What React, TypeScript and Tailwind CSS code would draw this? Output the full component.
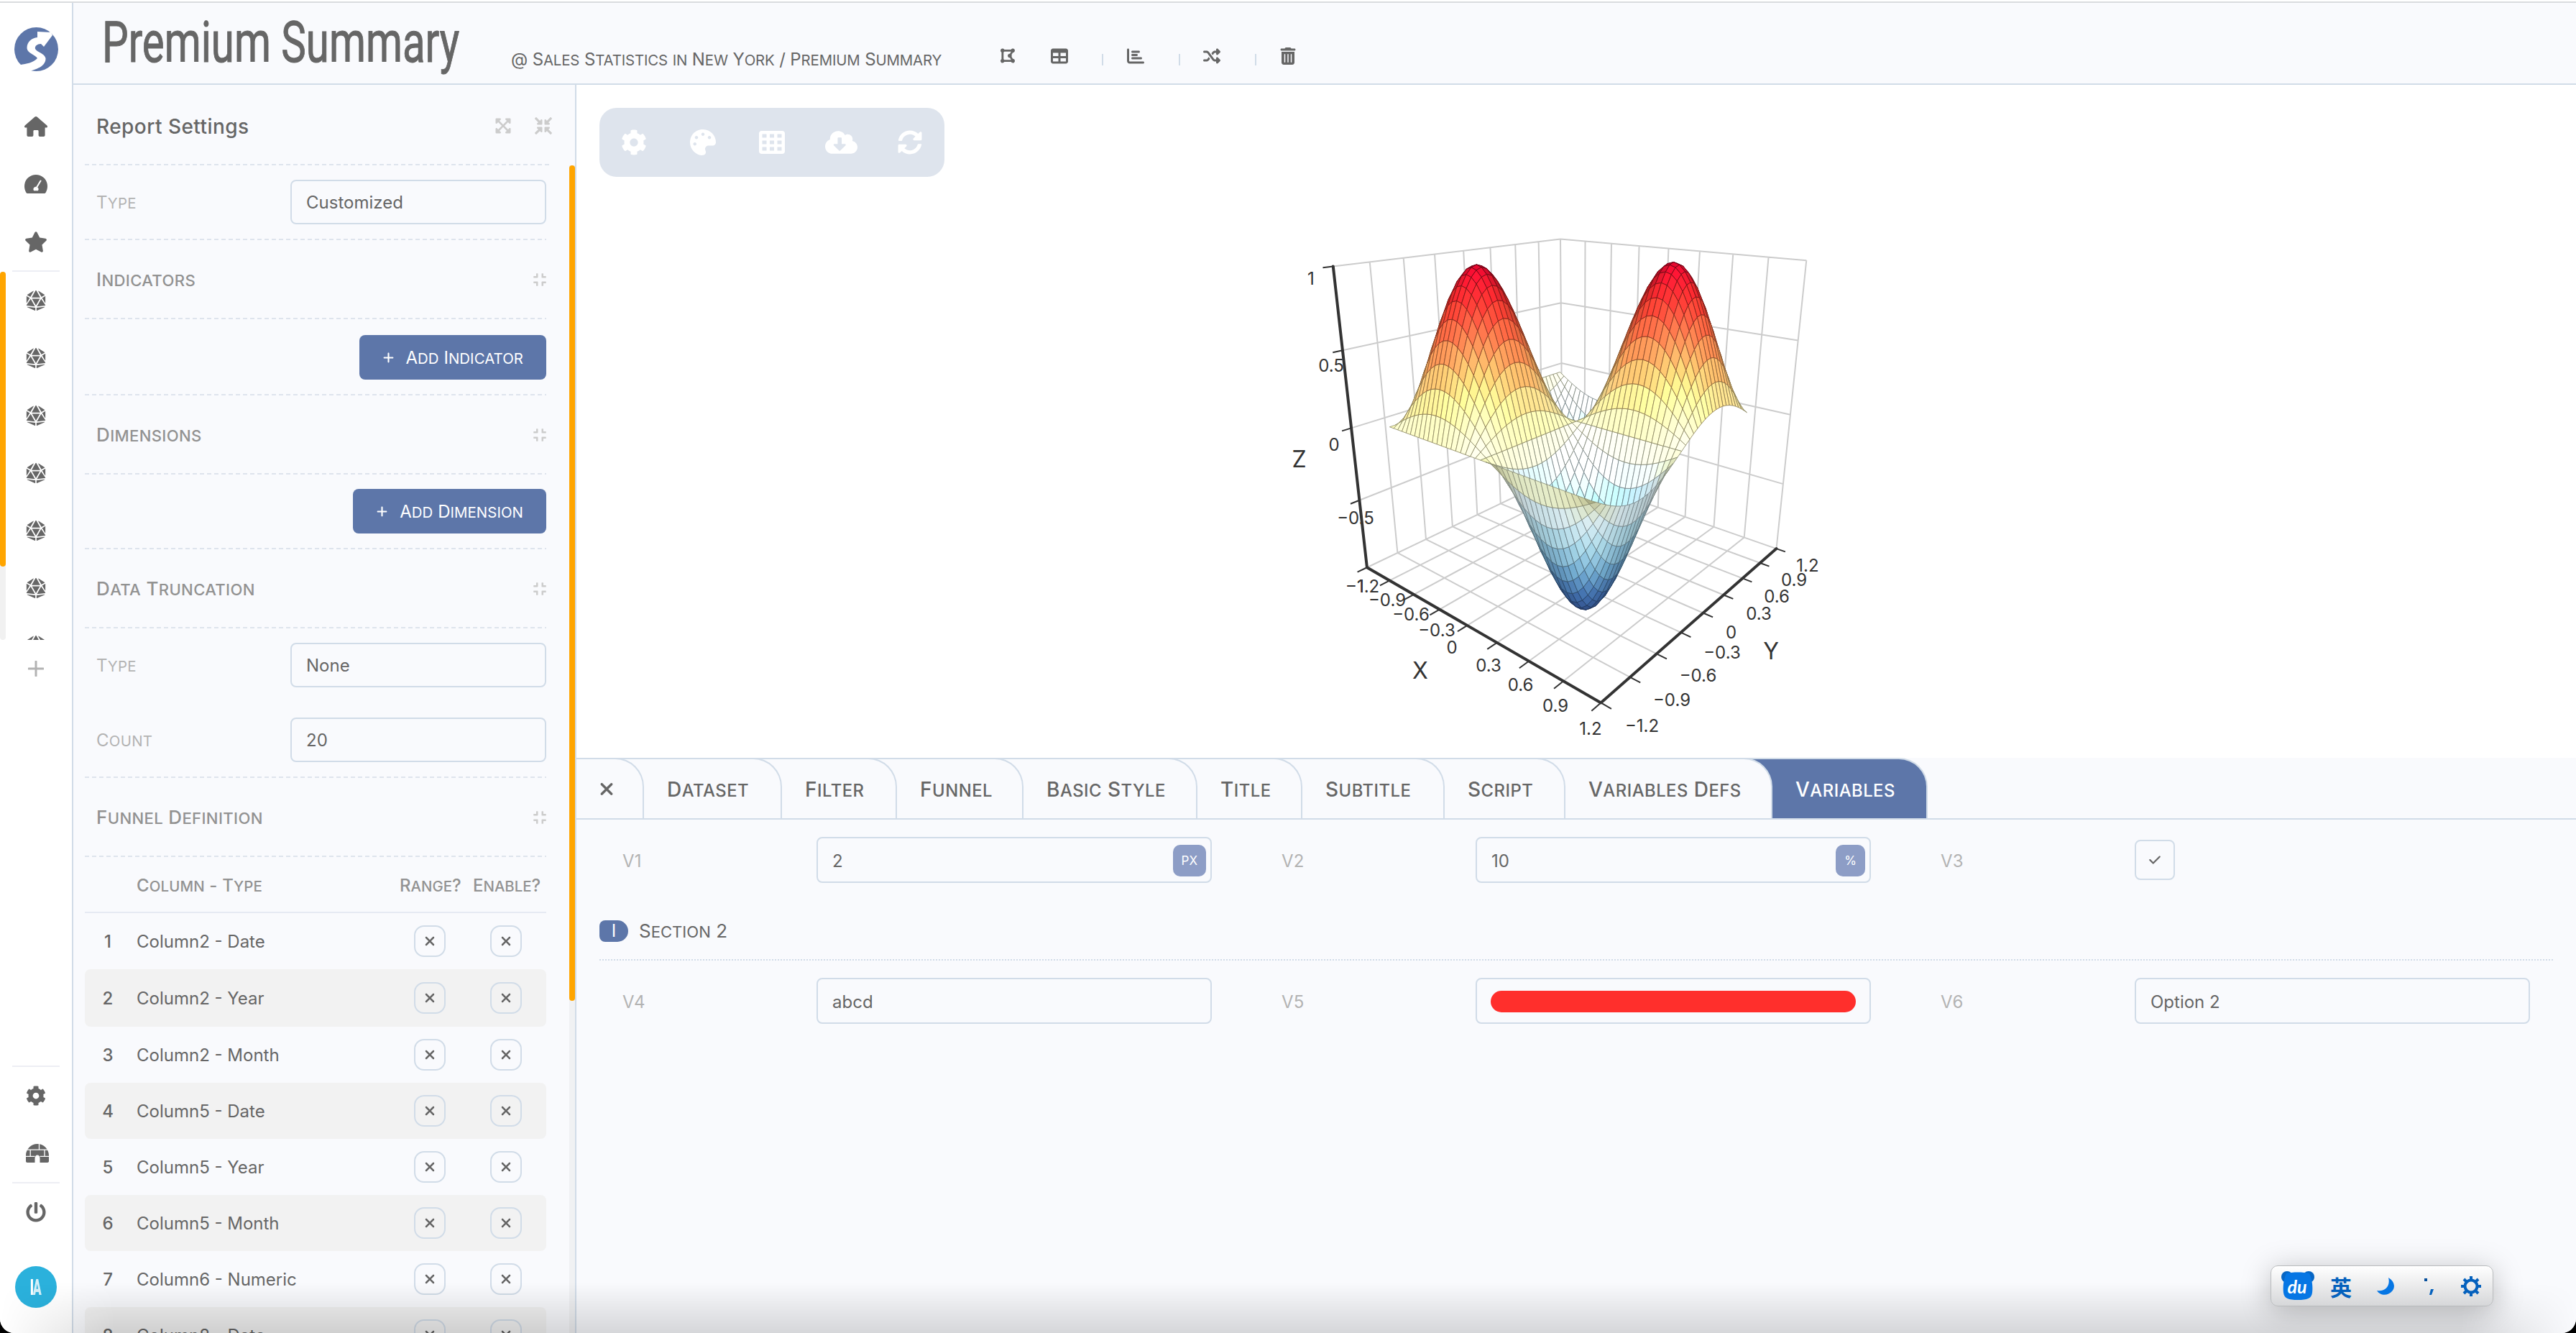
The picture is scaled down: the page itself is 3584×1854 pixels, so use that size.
import type { ReactNode } from 'react';
import {
  FaCloudDownloadAlt,
  FaCog,
  FaCompress,
  FaCompressArrowsAlt,
  FaDiceD20,
  FaExpandArrowsAlt,
  FaPalette,
  FaPowerOff,
  FaStar,
  FaSyncAlt,
} from 'react-icons/fa';
import { FaChartBar, FaCheck, FaDrawPolygon, FaPlus, FaShuffle, FaTable, FaTrashCan, FaXmark } from 'react-icons/fa6';

/* Small capitals: lowercase runs are set as reduced uppercase letters. */
function SC({ children, className = '' }: { children: string; className?: string }) {
  return (
    <span className={'whitespace-nowrap ' + className}>
      {children.split(/([a-z]+)/).map((part, i) =>
        i % 2 ? (
          <span key={i} className="text-[0.85em] uppercase">
            {part}
          </span>
        ) : (
          part
        ),
      )}
    </span>
  );
}

/* ---------- 3D surface chart ---------- */

// Rows of the perspective projection: screen x, screen y and depth.
const M = [
  -100.87653, 400.7936, -158.8284, 2193.1209, -24.467889, 28.891805, -246.12898, 585.84748, -0.10904443, 0.12982408,
  -0.072322453,
];
const depth = (x: number, y: number, z: number) => M[8] * x + M[9] * y + M[10] * z + 1;
const project = (x: number, y: number, z: number): [number, number] => {
  const w = depth(x, y, z);
  return [(M[0] * x + M[1] * y + M[2] * z + M[3]) / w, (M[4] * x + M[5] * y + M[6] * z + M[7]) / w];
};
const CAMERA = [3.361, -4.001, 1.576 * 1.2];
const RAMP = [
  [58, 92, 163],
  [69, 117, 180],
  [116, 173, 209],
  [171, 217, 233],
  [224, 243, 248],
  [255, 255, 191],
  [254, 224, 144],
  [253, 174, 97],
  [244, 109, 67],
  [225, 46, 42],
  [190, 6, 40],
];
function ramp(z: number) {
  const t = ((Math.max(-1, Math.min(1, z)) + 1) / 2) * 10;
  const i = Math.min(9, Math.floor(t));
  return RAMP[i].map((c, k) => c + (RAMP[i + 1][k] - c) * (t - i));
}
const rgb = (c: number[], f: number) => `rgb(${c.map((v) => Math.round(Math.min(255, v * f))).join(',')})`;
const height = (x: number, y: number) => Math.sin(Math.PI * x) * Math.sin(Math.PI * y);
const unit = (v: number[]) => {
  const l = Math.hypot(v[0], v[1], v[2]);
  return v.map((c) => c / l);
};
const LIGHT = unit([0.643 * 0.82, -0.766 * 0.82, 0.57]);

function buildFaces() {
  const step = 0.05;
  const faces: { d: string; fill: string; line: string; w: number }[] = [];
  for (let i = 0; i < 39; i++) {
    for (let j = 0; j < 39; j++) {
      const x0 = -1 + i * step;
      const y0 = -1 + j * step;
      const pts = [
        [x0, y0],
        [x0 + step, y0],
        [x0 + step, y0 + step],
        [x0, y0 + step],
      ].map(([x, y]) => [x, y, height(x, y)]);
      const cx = x0 + step / 2;
      const cy = y0 + step / 2;
      const cz = height(cx, cy);
      const dx = Math.PI * Math.cos(Math.PI * cx) * Math.sin(Math.PI * cy) * 1.2;
      const dy = Math.PI * Math.sin(Math.PI * cx) * Math.cos(Math.PI * cy) * 1.2;
      let n = unit([-dx, -dy, 1]);
      const toCam = [CAMERA[0] - cx, CAMERA[1] - cy, CAMERA[2] - cz * 1.2];
      if (n[0] * toCam[0] + n[1] * toCam[1] + n[2] * toCam[2] < 0) n = n.map((c) => -c);
      const ndl = Math.max(0, n[0] * LIGHT[0] + n[1] * LIGHT[1] + n[2] * LIGHT[2]);
      const base = ramp(cz);
      faces.push({
        d: 'M' + pts.map((p) => project(p[0], p[1], p[2]).map((v) => v.toFixed(2)).join(',')).join('L') + 'Z',
        fill: rgb(base, 0.62 + 0.7 * ndl),
        line: rgb(base, 0.56),
        w: depth(cx, cy, cz),
      });
    }
  }
  return faces.sort((a, b) => b.w - a.w);
}
const FACES = buildFaces();
const TICKS = [-1.2, -0.9, -0.6, -0.3, 0, 0.3, 0.6, 0.9, 1.2];
const ZTICKS = [-1, -0.5, 0, 0.5, 1];
type P3 = [number, number, number];
const seg = (a: P3, b: P3) => `M${project(...a).join(',')}L${project(...b).join(',')}`;
const GRID = [
  ...TICKS.flatMap((t) => [
    seg([t, -1.2, -1], [t, 1.2, -1]),
    seg([-1.2, t, -1], [1.2, t, -1]),
    seg([t, 1.2, -1], [t, 1.2, 1]),
    seg([-1.2, t, -1], [-1.2, t, 1]),
  ]),
  ...ZTICKS.flatMap((z) => [seg([-1.2, -1.2, z], [-1.2, 1.2, z]), seg([-1.2, 1.2, z], [1.2, 1.2, z])]),
].join('');
const AXES = [
  seg([-1.2, -1.2, -1], [1.2, -1.2, -1]),
  seg([1.2, -1.2, -1], [1.2, 1.2, -1]),
  seg([-1.2, -1.2, -1], [-1.2, -1.2, 1]),
].join('');
const MARKS = [
  ...TICKS.flatMap((t) => [seg([t, -1.2, -1], [t, -1.29, -1]), seg([1.2, t, -1], [1.28, t, -1])]),
  ...ZTICKS.map((z) => seg([-1.2, -1.2, z], [-1.2, -1.28, z])),
].join('');
const LABELS: [string, number, number][] = [
  ['−0.9', 1930, 834],
  ['−0.6', 1963, 854],
  ['−0.3', 1999, 876],
  ['0', 2020, 900],
  ['0.3', 2071, 925],
  ['0.6', 2115.5, 952],
  ['0.9', 2164, 981],
  ['1.2', 2213, 1013],
  ['−1.2', 2284.5, 1009],
  ['−0.9', 2326, 972.5],
  ['−0.6', 2362.5, 938.5],
  ['−0.3', 2396, 907],
  ['0', 2408.5, 878.5],
  ['0.3', 2447, 852.5],
  ['0.6', 2472, 829],
  ['0.9', 2496, 806],
  ['1.2', 2515, 785.5],
  ['1', 1824, 387],
  ['0.5', 1852, 507.5],
  ['0', 1856, 618],
  ['−0.5', 1886, 720],
];

function SurfaceChart() {
  return (
    <svg viewBox="802 118 2782 936" className="block h-[936px] w-[2782px]">
      <path d={GRID} stroke="#ccc" strokeWidth="2" fill="none" />
      {FACES.map((f, i) => (
        <path key={i} d={f.d} fill={f.fill} stroke={f.line} strokeWidth="0.85" strokeLinejoin="round" />
      ))}
      <path d={AXES} stroke="#333" strokeWidth="4" fill="none" strokeLinecap="round" />
      <path d={MARKS} stroke="#333" strokeWidth="2" fill="none" />
      <g fill="#333" textAnchor="middle" className="font-['Inter'] text-[24px]">
        {LABELS.map(([t, x, y], i) => (
          <text key={i} x={x} y={y + 9}>
            {t}
          </text>
        ))}
        <text x="1872" y="824" textAnchor="start">−1.2</text>
        <text x="1872" y="824" textAnchor="start">−1</text>
      </g>
      <g fill="#333" textAnchor="middle" className="font-['Inter'] text-[32px]">
        <text x="1976" y="944">X</text>
        <text x="2464" y="917">Y</text>
        <text x="1807.5" y="650">Z</text>
      </g>
    </svg>
  );
}

/* ---------- Left navigation ---------- */

function NavItem({ children }: { children: ReactNode }) {
  return <div className="flex h-20 w-full shrink-0 items-center justify-center">{children}</div>;
}

function HomeIcon() {
  return (
    <svg viewBox="0 0 32 28" className="h-7 w-8" fill="currentColor">
      <path d="M16 0C16.800 0 17.300 .3 17.800 .7L31.300 12.600C32.600 13.800 32 15.600 30.300 15.600H28.600V26C28.600 27.200 27.800 28 26.600 28H21.500C20.300 28 19.600 27.200 19.600 26V20.500C19.600 19.500 19 19 18 19H14C13 19 12.400 19.500 12.400 20.500V26C12.400 27.200 11.700 28 10.500 28H5.400C4.200 28 3.400 27.200 3.400 26V15.600H1.700C0 15.600 -.6 13.800 .7 12.600L14.200 .7C14.700 .3 15.200 0 16 0Z" />
    </svg>
  );
}

function GaugeIcon() {
  return (
    <svg viewBox="0 0 32 26" className="h-[26px] w-8">
      <path d="M16 0C25 0 32 7 32 16C32 19 31.200 22 29.800 24.400C29.200 25.500 28.400 26 27.200 26H4.800C3.600 26 2.800 25.500 2.200 24.400C.8 22 0 19 0 16C0 7 7 0 16 0Z" fill="currentColor" />
      <path d="M22.500 8.500L16.500 18.500" stroke="#fff" strokeWidth="2" strokeLinecap="round" />
      <path d="M16 16.800A3.500 3.500 0 0 1 19 22.300H13A3.500 3.500 0 0 1 16 16.800Z" fill="#fff" />
    </svg>
  );
}

function IglooIcon() {
  return (
    <svg viewBox="0 0 32 26" className="ml-1 h-[26px] w-8">
      <path d="M16 0C25 0 32 7.500 32 16V24C32 25.200 31.200 26 30 26H19.500V20C19.500 17.500 18 15.500 16 15.500C14 15.500 12.500 17.500 12.500 20V26H2C.8 26 0 25.200 0 24V16C0 7.500 7 0 16 0Z" fill="currentColor" />
      <path d="M2 8.200H30M0 17.300H12.500M19.500 17.300H32M18.500 0V8M6.200 8.200V17M26 8.200V17" stroke="#fff" strokeWidth="1.3" fill="none" />
    </svg>
  );
}

function Sidebar() {
  return (
    <nav className="flex w-[102px] shrink-0 flex-col items-center border-r-2 border-[#d1dce8] bg-white text-[#666]">
      <svg viewBox="0 0 61 61" className="mt-[34px] h-[61px] w-[61px] shrink-0">
        <circle cx="30.5" cy="30.5" r="30.5" fill="#5d76a9" />
        <path
          d="M32 6L51 7L53 11L41 27L37 23C32 23 28 26 29 30C32 35 42 36 43.500 43C44 53 33 58 21 61L6 58L9 52C16 51 27 49 32 43C29 38 18 36 17.500 29C17.500 20 24 15 32 14Z"
          fill="#fff"
        />
      </svg>
      <div className="mt-[37px] flex w-full flex-col">
        <NavItem><HomeIcon /></NavItem>
        <NavItem><GaugeIcon /></NavItem>
        <NavItem><FaStar className="h-[29px] w-8" /></NavItem>
      </div>
      <div className="h-0.5 w-[66px] shrink-0 bg-[#edeef4]" />
      <div className="relative h-[512px] w-full shrink-0 overflow-hidden">
        {Array.from({ length: 7 }, (_, i) => (
          <NavItem key={i}><FaDiceD20 className="h-7 w-7" /></NavItem>
        ))}
        <div className="absolute top-0 left-0 h-full w-2 rounded bg-[#f1f1f1]">
          <div className="h-[410px] w-2 rounded bg-[#ffa500]" />
        </div>
      </div>
      <div className="flex h-20 shrink-0 items-center justify-center text-[#b3b3b3]">
        <svg viewBox="0 0 22 22" className="h-[22px] w-[22px]">
          <path d="M11 1V21M1 11H21" stroke="currentColor" strokeWidth="3" strokeLinecap="round" />
        </svg>
      </div>
      <div className="grow" />
      <div className="h-0.5 w-[66px] shrink-0 bg-[#edeef4]" />
      <NavItem><FaCog className="h-7 w-7" /></NavItem>
      <NavItem><IglooIcon /></NavItem>
      <div className="h-0.5 w-[66px] shrink-0 bg-[#edeef4]" />
      <NavItem><FaPowerOff className="h-7 w-7" /></NavItem>
      <div className="mt-[35px] mb-[35px] flex h-[58px] w-[58px] shrink-0 items-center justify-center rounded-full bg-[#2bb1dc] font-['Roboto'] text-[32px] font-black text-white">
        <span className="inline-flex scale-x-55 whitespace-nowrap">
          I<span className="-ml-0.5 text-white/80">A</span>
        </span>
      </div>
    </nav>
  );
}

/* ---------- Header ---------- */

function HeaderDivider({ className }: { className: string }) {
  return <div className={'mt-2.5 h-4 w-0.5 bg-[#d1dce8] ' + className} />;
}

function Header() {
  return (
    <header className="flex h-[114px] shrink-0 items-center border-b-2 border-[#d1dce8] bg-[#f9fafd]">
      <h1 className="ml-[40px] w-[569px] font-['Roboto'] text-[80px] leading-none font-normal text-[#666]">
        <span className="relative top-[-1px] inline-block origin-left scale-x-[0.727] whitespace-nowrap [-webkit-text-stroke:1px_#666]">
          Premium Summary
        </span>
      </h1>
      <div className="w-[681px] pt-[46px] leading-none">
        <SC className="text-[24px] tracking-[-0.14px]">@ Sales Statistics in New York / Premium Summary</SC>
      </div>
      <div className="mt-[35px] flex h-6 items-center">
        <FaDrawPolygon className="h-[23px] w-5" />
        <FaTable className="ml-[50px] h-6 w-6" />
        <HeaderDivider className="ml-[47px]" />
        <FaChartBar className="ml-[33px] h-6 w-6" />
        <HeaderDivider className="ml-[48px]" />
        <FaShuffle className="ml-[32px] h-6 w-6" />
        <HeaderDivider className="ml-[48px]" />
        <FaTrashCan className="ml-[32px] h-6 w-6" />
      </div>
    </header>
  );
}

/* ---------- Settings panel ---------- */

function Dashed() {
  return (
    <div className="h-0.5 shrink-0 bg-[repeating-linear-gradient(90deg,#dee4ed_0,#dee4ed_6px,transparent_6px,transparent_10px)]" />
  );
}

function Section({ title }: { title: string }) {
  return (
    <>
      <div className="flex h-[108px] shrink-0 items-center justify-between pt-0.5 pl-4">
        <SC className="text-[26px] font-medium tracking-[0.35px] text-[#929292]">{title}</SC>
        <FaCompress className="h-5 w-[18px] text-[#ccc]" />
      </div>
      <Dashed />
    </>
  );
}

function Field({ label, value }: { label: string; value: string }) {
  return (
    <div className="flex h-[62px] items-center pl-4">
      <SC className="w-[270px] pt-0.5 tracking-[0.3px] text-[#b3b3b3]">{label}</SC>
      <div className="flex h-[62px] w-[356px] items-center rounded-lg border-2 border-[#d1dce8] pt-0.5 pl-5">{value}</div>
    </div>
  );
}

function AddButton({ children }: { children: string }) {
  return (
    <button className="ml-auto flex h-[62px] items-center rounded-lg bg-[#5d76a9] px-8 text-white">
      <FaPlus className="mr-4 h-[17px] w-[17px]" />
      <SC className="pt-0.5 tracking-[0.05px]">{children}</SC>
    </button>
  );
}

function Toggle() {
  return (
    <div className="flex h-11 w-11 items-center justify-center rounded-[14px] border-2 border-[#d1dce8]">
      <FaXmark className="h-5 w-5" />
    </div>
  );
}

const COLUMNS = [
  'Column2 - Date',
  'Column2 - Year',
  'Column2 - Month',
  'Column5 - Date',
  'Column5 - Year',
  'Column5 - Month',
  'Column6 - Numeric',
  'Column8 - Date',
];

function SettingsPanel() {
  return (
    <aside className="relative flex w-[700px] shrink-0 flex-col overflow-hidden border-r-2 border-[#d1dce8] bg-[#f9fafd] pl-4">
      <div className="flex h-[110px] w-[650px] shrink-0 items-center pt-1 pl-4">
        <span className="pt-0.5 text-[28px] font-medium tracking-[0.45px]">Report Settings</span>
        <FaExpandArrowsAlt className="ml-auto h-6 w-6 text-[#ccc]" />
        <FaCompressArrowsAlt className="ml-[32px] h-6 w-6 text-[#ccc]" />
      </div>
      <div className="w-[650px]"><Dashed /></div>
      <div className="flex h-[1624px] w-[642px] shrink-0 flex-col overflow-hidden">
        <div className="h-[102px] shrink-0 pt-5"><Field label="Type" value="Customized" /></div>
        <Dashed />
        <Section title="Indicators" />
        <div className="flex h-[104px] shrink-0 pt-[22px]"><AddButton>Add Indicator</AddButton></div>
        <Dashed />
        <Section title="Dimensions" />
        <div className="flex h-[102px] shrink-0 pt-5"><AddButton>Add Dimension</AddButton></div>
        <Dashed />
        <Section title="Data Truncation" />
        <div className="flex h-[206px] shrink-0 flex-col gap-[42px] pt-5">
          <Field label="Type" value="None" />
          <Field label="Count" value="20" />
        </div>
        <Dashed />
        <Section title="Funnel Definition" />
        <div className="flex h-[78px] shrink-0 items-center border-b-2 border-[#e6eaf3] pt-1 pl-[72px] font-medium text-[#929292]">
          <SC className="w-[366px] tracking-[0.15px]">Column - Type</SC>
          <SC className="w-[102px]">Range?</SC>
          <SC>Enable?</SC>
        </div>
        {COLUMNS.map((c, i) => (
          <div
            key={c}
            className={
              'flex shrink-0 items-center rounded-lg ' + (i === 1 ? 'h-20 ' : 'h-[78px] ') + (i % 2 ? 'bg-[#f2f2f2]' : '')
            }
          >
            <span className="w-16 pt-0.5 text-center font-medium">{i + 1}</span>
            <span className="w-[394px] pt-0.5 pl-2">{c}</span>
            <Toggle />
            <div className="w-[62px]" />
            <Toggle />
          </div>
        ))}
      </div>
      <div className="absolute top-28 right-0 bottom-0 w-2 bg-[#f0f1f3]">
        <div className="h-[1162px] w-2 rounded bg-[#ffa500]" />
      </div>
    </aside>
  );
}

/* ---------- Chart toolbar ---------- */

function GridIcon() {
  const cells = [0, 1, 2];
  return (
    <svg viewBox="0 0 36 32" className="h-8 w-9">
      <rect width="36" height="32" rx="4" fill="#fff" />
      {cells.map((r) => cells.map((c) => <rect key={`${r}${c}`} x={4.5 + c * 10.5} y={4.5 + r * 9} width="6" height="5" fill="#dee4ed" />))}
    </svg>
  );
}

function ToolSlot({ children }: { children: ReactNode }) {
  return <div className="flex w-24 items-center justify-center">{children}</div>;
}

function ChartToolbar() {
  return (
    <div className="absolute top-8 left-8 flex h-24 w-[480px] items-center rounded-3xl bg-[#dee4ed] text-white">
      <ToolSlot><FaCog className="h-9 w-9" /></ToolSlot>
      <ToolSlot><FaPalette className="h-9 w-9" /></ToolSlot>
      <ToolSlot><GridIcon /></ToolSlot>
      <ToolSlot><FaCloudDownloadAlt className="h-9 w-[45px]" /></ToolSlot>
      <ToolSlot><FaSyncAlt className="h-[34px] w-[34px]" /></ToolSlot>
    </div>
  );
}

/* ---------- Variables panel ---------- */

const TABS: { label: string; w: string; z: string }[] = [
  { label: 'Dataset', w: 'w-[232px]', z: 'z-[8]' },
  { label: 'Filter', w: 'w-[200px]', z: 'z-[7]' },
  { label: 'Funnel', w: 'w-[216px]', z: 'z-[6]' },
  { label: 'Basic Style', w: 'w-[282px]', z: 'z-[5]' },
  { label: 'Title', w: 'w-[186px]', z: 'z-[4]' },
  { label: 'Subtitle', w: 'w-[238px]', z: 'z-[3]' },
  { label: 'Script', w: 'w-[208px]', z: 'z-[2]' },
  { label: 'Variables Defs', w: 'w-[328px]', z: 'z-[1]' },
];

function Tabs() {
  return (
    <div className="flex h-[86px] shrink-0 border-b-2 border-[#d1dce8] text-[28px] font-medium tracking-[0.5px]">
      <div className="relative z-[9] flex w-[94px] items-center rounded-tr-[40px] border-t-2 border-r-2 border-[#d1dce8] bg-[#f9fafd] pl-[30px]">
        <FaXmark className="h-[27px] w-[24px]" />
      </div>
      {TABS.map((t) => (
        <div
          key={t.label}
          className={
            'relative -ml-10 flex items-center rounded-tr-[40px] border-t-2 border-r-2 border-[#d1dce8] bg-[#f9fafd] pt-0.5 pl-[72px] ' +
            t.w +
            ' ' +
            t.z
          }
        >
          <SC>{t.label}</SC>
        </div>
      ))}
      <div className="-ml-10 flex w-[256px] items-center rounded-tr-[40px] border-t-2 border-r-2 border-[#d1dce8] bg-[#5d76a9] pt-0.5 pl-[72px] text-white">
        <SC>Variables</SC>
      </div>
    </div>
  );
}

function VarField({ label, children }: { label: string; children: ReactNode }) {
  return (
    <div className="flex h-16 w-[917px] shrink-0 items-center pl-8">
      <span className="w-[270px] pt-[3px] tracking-[0.3px] text-[#b3b3b3]">{label}</span>
      {children}
    </div>
  );
}

function Input({ children, unit }: { children?: ReactNode; unit?: string }) {
  return (
    <div className="flex h-16 w-[550px] items-center rounded-lg border-2 border-[#d1dce8] pr-[6px] pl-5">
      <span className="grow pt-[3px]">{children}</span>
      {unit && (
        <span className="mt-0.5 flex h-11 items-center rounded-[10px] bg-[#8d9dc6] px-[12px] text-[17px] text-white">
          {unit}
        </span>
      )}
    </div>
  );
}

function VariablesPanel() {
  return (
    <section className="flex grow flex-col bg-[#f9fafd]">
      <Tabs />
      <div className="flex h-[88px] items-end pl-8">
        <VarField label="V1"><Input unit="PX">2</Input></VarField>
        <VarField label="V2"><Input unit="%">10</Input></VarField>
        <VarField label="V3">
          <div className="flex h-14 w-14 items-center justify-center rounded-lg border-2 border-[#d1dce8]">
            <FaCheck className="h-[18px] w-4" />
          </div>
        </VarField>
      </div>
      <div className="mx-8 mt-[29px] mb-0.5 flex h-[75px] items-center">
        <span className="flex h-[30px] w-10 items-center justify-center rounded-l-lg rounded-r-[15px] bg-[#5d76a9] text-white">I</span>
        <SC className="ml-[15px] text-[26px]">Section 2</SC>
      </div>
      <div className="mx-8 h-0.5 bg-[repeating-linear-gradient(90deg,#d1dce8_0,#d1dce8_2px,transparent_2px,transparent_4px)]" />
      <div className="mt-6 flex pl-8">
        <VarField label="V4"><Input>abcd</Input></VarField>
        <VarField label="V5">
          <div className="flex h-16 w-[550px] items-center rounded-lg border-2 border-[#d1dce8] px-[19px]">
            <div className="mt-0.5 h-[30px] w-full rounded-[15px] bg-[#ff2f2c]" />
          </div>
        </VarField>
        <VarField label="V6"><Input>Option 2</Input></VarField>
      </div>
    </section>
  );
}

/* ---------- Input method bar ---------- */

function ImeBar() {
  return (
    <div className="absolute top-[1760px] left-[3159px] flex h-[57px] w-[310px] items-center rounded-[10px] border border-[#b9bbbd] bg-gradient-to-b from-white to-[#d6d7d9] shadow-[0_6px_40px_rgba(0,0,0,0.25)]">
      <svg viewBox="0 0 46 42" className="ml-[14px] h-[42px] w-[46px]">
        <circle cx="8" cy="8" r="8" fill="#0766c4" />
        <circle cx="38" cy="8" r="8" fill="#0766c4" />
        <path d="M7 3C16 1 30 1 39 3C43 11 44 22 43 30C42 38 36 40 23 40C10 40 4 38 3 30C2 22 3 11 7 3Z" fill="#0676e4" />
        <text x="22" y="31" textAnchor="middle" fill="#fff" className="font-['Lato'] text-[25px] font-bold italic">
          du
        </text>
      </svg>
      <span className="ml-[22px] w-8 font-['Noto_Sans_CJK_SC',sans-serif] text-[30px] leading-none font-bold text-[#0561bd]">英</span>
      <svg viewBox="0 0 26 26" className="ml-[32px] h-[26px] w-[26px]">
        <path d="M17 1C24 5 28 13 22 20C16 27 5 26 1 19C13 21 20 12 17 1Z" fill="#0676e4" />
      </svg>
      <svg viewBox="0 0 16 26" className="ml-[40px] h-[26px] w-4">
        <rect x="1" y="2" width="4" height="4" fill="#064f9c" />
        <path d="M10 17H14L11 25H8Z" fill="#0561bd" />
      </svg>
      <svg viewBox="0 0 30 30" className="ml-[35px] h-[30px] w-[30px]" stroke="#0561bd" fill="none">
        <circle cx="15" cy="15" r="8.5" strokeWidth="4" />
        <path
          d="M15 1V6M15 24V29M1 15H6M24 15H29M5 5L8.500 8.500M21.500 21.500L25 25M25 5L21.500 8.500M8.500 21.500L5 25"
          strokeWidth="4"
        />
      </svg>
    </div>
  );
}

export default function App() {
  return (
    <div className="h-[1854px] w-[3584px] overflow-hidden bg-black">
      <div className="relative flex h-full flex-col overflow-hidden rounded-b-[20px] bg-white font-['Inter',sans-serif] text-[24px] leading-none text-[#666]">
        <div className="mt-0.5 h-0.5 shrink-0 bg-[#dadcdf]" />
        <div className="flex h-[1850px]">
          <Sidebar />
          <div className="flex w-[3482px] flex-col">
            <Header />
            <div className="flex h-[1736px]">
              <SettingsPanel />
              <main className="flex w-[2782px] flex-col">
                <div className="relative h-[936px] bg-white">
                  <SurfaceChart />
                  <ChartToolbar />
                </div>
                <VariablesPanel />
              </main>
            </div>
          </div>
        </div>
        <div className="pointer-events-none absolute inset-x-0 bottom-0 h-[70px] bg-gradient-to-t from-black/14 to-transparent [mask-image:linear-gradient(90deg,transparent,black_160px,black_3424px,transparent)]" />
        <ImeBar />
      </div>
    </div>
  );
}
